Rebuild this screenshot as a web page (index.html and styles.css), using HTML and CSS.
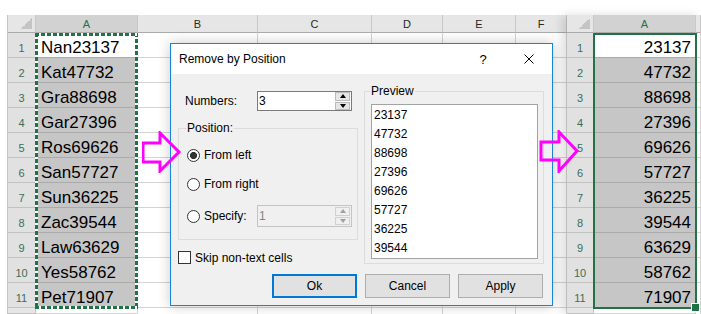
FILE: index.html
```html
<!DOCTYPE html>
<html lang="en">
<head>
    <meta charset="UTF-8">
    <title>Remove by Position</title>
    <link rel="stylesheet" href="styles.css">
</head>
<body>
<div class="screen">
    <!-- sheet before -->
    <div class="sheet sheet-left">
        <div class="col rh">
            <div class="hd corner"></div>
            <div class="cell">1</div>
            <div class="cell">2</div>
            <div class="cell">3</div>
            <div class="cell">4</div>
            <div class="cell">5</div>
            <div class="cell">6</div>
            <div class="cell">7</div>
            <div class="cell">8</div>
            <div class="cell">9</div>
            <div class="cell">10</div>
            <div class="cell">11</div>
            <div class="cell tail"></div>
        </div>
        <div class="col col-a">
            <div class="hd hd-sel">A</div>
            <div class="range range-copy">
                <div class="cell active">Nan23137</div>
                <div class="cell">Kat47732</div>
                <div class="cell">Gra88698</div>
                <div class="cell">Gar27396</div>
                <div class="cell">Ros69626</div>
                <div class="cell">San57727</div>
                <div class="cell">Sun36225</div>
                <div class="cell">Zac39544</div>
                <div class="cell">Law63629</div>
                <div class="cell">Yes58762</div>
                <div class="cell">Pet71907</div>
            </div>
            <div class="cell tail"></div>
        </div>
        <div class="col col-b"><div class="hd">B</div><div class="blank"></div></div>
        <div class="col col-c"><div class="hd">C</div><div class="blank"></div></div>
        <div class="col col-d"><div class="hd">D</div><div class="blank"></div></div>
        <div class="col col-e"><div class="hd">E</div><div class="blank"></div></div>
        <div class="col col-f"><div class="hd">F</div><div class="blank"></div></div>
    </div>

    <!-- sheet after -->
    <div class="sheet sheet-right">
        <div class="col rh">
            <div class="hd corner"></div>
            <div class="cell">1</div>
            <div class="cell">2</div>
            <div class="cell">3</div>
            <div class="cell">4</div>
            <div class="cell">5</div>
            <div class="cell">6</div>
            <div class="cell">7</div>
            <div class="cell">8</div>
            <div class="cell">9</div>
            <div class="cell">10</div>
            <div class="cell">11</div>
            <div class="cell tail"></div>
        </div>
        <div class="col col-a">
            <div class="hd hd-sel">A</div>
            <div class="range range-solid">
                <div class="cell active">23137</div>
                <div class="cell">47732</div>
                <div class="cell">88698</div>
                <div class="cell">27396</div>
                <div class="cell">69626</div>
                <div class="cell">57727</div>
                <div class="cell">36225</div>
                <div class="cell">39544</div>
                <div class="cell">63629</div>
                <div class="cell">58762</div>
                <div class="cell">71907</div>
            </div>
            <div class="cell tail"></div>
        </div>
        <div class="col col-rest"><div class="hd"></div><div class="blank"></div></div>
    </div>

    <!-- dialog -->
    <div class="dialog">
        <div class="titlebar">
            <span class="title">Remove by Position</span>
            <span class="tb-btn">?</span>
            <span class="tb-btn">
                <svg width="10" height="10" viewBox="0 0 10 10"><path d="M0.5 0.5 L9.5 9.5 M9.5 0.5 L0.5 9.5" stroke="#000" stroke-width="1"/></svg>
            </span>
        </div>
        <div class="dlg-body">
            <div class="left-pane">
                <div class="num-row">
                    <span class="num-label">Numbers:</span>
                    <div class="spin">
                        <span class="val">3</span>
                        <div class="spin-btns"><i class="up"></i><i class="down"></i></div>
                    </div>
                </div>
                <fieldset class="group pos">
                    <legend>Position:</legend>
                    <div class="opt first"><span class="radio checked"></span>From left</div>
                    <div class="opt"><span class="radio"></span>From right</div>
                    <div class="opt specify">
                        <span class="radio"></span>Specify:
                        <div class="spin disabled">
                            <span class="val">1</span>
                            <div class="spin-btns"><i class="up"></i><i class="down"></i></div>
                        </div>
                    </div>
                </fieldset>
                <div class="check-row"><span class="checkbox"></span>Skip non-text cells</div>
            </div>
            <fieldset class="group preview">
                <legend>Preview</legend>
                <div class="list">
                    <div>23137</div>
                    <div>47732</div>
                    <div>88698</div>
                    <div>27396</div>
                    <div>69626</div>
                    <div>57727</div>
                    <div>36225</div>
                    <div>39544</div>
                </div>
            </fieldset>
        </div>
        <div class="buttons">
            <div class="btn btn-ok">Ok</div>
            <div class="btn">Cancel</div>
            <div class="btn">Apply</div>
        </div>
    </div>

    <svg class="arrow arrow-left" width="40" height="42" viewBox="0 0 40 42">
        <polygon points="1,12 18,12 18,2 37,21 18,40 18,31 1,31" fill="none" stroke="#ff00ff" stroke-width="3"/>
    </svg>
    <svg class="arrow arrow-right" width="41" height="43" viewBox="0 0 41 43">
        <polygon points="2,12 20,12 20,2 38,21 20,41 20,30 2,30" fill="none" stroke="#ff00ff" stroke-width="3"/>
    </svg>
</div>
</body>
</html>
```

FILE: styles.css
```css
* {
    margin: 0;
    padding: 0;
    box-sizing: border-box;
}

body {
    font-family: "Liberation Sans", Arial, sans-serif;
    background: #fff;
}

.screen {
    position: relative;
    width: 701px;
    height: 314px;
    overflow: hidden;
    display: flex;
    padding-top: 15px;
}

/* sheets */
.sheet {
    display: flex;
    height: 299px;
    background: #fff;
}

.sheet-left {
    width: 567px;
    padding-left: 7px;
}

.sheet-right {
    width: 134px;
    box-shadow: -5px 0 9px rgba(0, 0, 0, 0.13);
}

.col {
    display: flex;
    flex-direction: column;
    flex-shrink: 0;
}

.hd {
    height: 18px;
    flex-shrink: 0;
    background: #e6e6e6;
    border-right: 1px solid #c8c8c8;
    border-bottom: 1px solid #ababab;
    font-size: 11px;
    color: #262626;
    display: flex;
    align-items: center;
    justify-content: center;
}

.hd-sel {
    background: #d2d2d2;
    color: #217346;
}

.corner {
    background: #e6e6e6 linear-gradient(to top left, #c4c4c4 50%, transparent 50%) no-repeat right 3px bottom 3px / 11px 11px;
}

.cell {
    height: 25px;
    flex-shrink: 0;
    border-right: 1px solid #d4d4d4;
    border-bottom: 1px solid #d4d4d4;
    font-size: 17px;
    line-height: 18px;
    display: flex;
    align-items: flex-end;
    color: #000;
}

.cell.tail {
    height: 6px;
    background: #fff;
}

.rh .cell {
    background: #e1e1e1;
    border-color: #c2c2c2;
    justify-content: center;
    font-size: 11px;
    line-height: 13px;
    padding-bottom: 2px;
    color: #3b6e58;
}

.rh .cell.tail {
    background: #e6e6e6;
}

.sheet-left .rh {
    width: 29px;
    border-left: 1px solid #c6c6c6;
}

.sheet-right .rh {
    width: 27px;
}

.col-a {
    width: 102px;
}

.col-b { width: 120px; }
.col-c { width: 114px; }
.col-d { width: 71px; }
.col-e { width: 73px; }
.col-f { width: 51px; }
.col-rest { width: 5px; }

.blank {
    flex: 1;
    border-right: 1px solid #d4d4d4;
    background: repeating-linear-gradient(to bottom, #fff 0 24px, #d4d4d4 24px 25px);
}

.range {
    position: relative;
}

.range .cell {
    background: #c6c6c6;
    border-color: #ababab;
}

.range .cell.active {
    background: #fff;
}

.range-copy .cell {
    padding-left: 5px;
}

.range-copy::after {
    content: '';
    position: absolute;
    top: 0;
    right: 0;
    bottom: -1px;
    left: -1px;
    background:
        repeating-linear-gradient(90deg, #217346 0 4px, #fff 4px 6px) top / 100% 3px no-repeat,
        repeating-linear-gradient(90deg, #217346 0 4px, #fff 4px 6px) bottom / 100% 3px no-repeat,
        repeating-linear-gradient(180deg, #217346 0 4px, #fff 4px 6px) left / 3px 100% no-repeat,
        repeating-linear-gradient(180deg, #217346 0 4px, #fff 4px 6px) right / 3px 100% no-repeat;
}

.range-solid .cell {
    justify-content: flex-end;
    padding-right: 4px;
}

.range-solid::after {
    content: '';
    position: absolute;
    top: 0;
    right: -1px;
    bottom: -1px;
    left: -1px;
    border: 2px solid #217346;
}

.range-solid::before {
    content: '';
    position: absolute;
    right: -4px;
    bottom: -4px;
    width: 7px;
    height: 7px;
    background: #217346;
    border: 1px solid #fff;
    z-index: 1;
}

/* dialog */
.dialog {
    position: absolute;
    left: 170px;
    top: 43px;
    width: 383px;
    height: 263px;
    background: #f0f0f0;
    border: 1px solid #1883d7;
    box-shadow: 0 0 12px rgba(0, 0, 0, 0.22);
    font-size: 12px;
    color: #000;
    z-index: 2;
}

.titlebar {
    height: 30px;
    background: #fff;
    display: flex;
    align-items: center;
}

.title {
    flex: 1;
    padding-left: 8px;
}

.tb-btn {
    width: 46px;
    height: 30px;
    display: flex;
    align-items: center;
    justify-content: center;
    font-size: 13px;
}

.dlg-body {
    display: grid;
    grid-template-columns: 180px 180px;
    column-gap: 6px;
    padding-left: 7px;
}

.num-row {
    display: flex;
    align-items: center;
    height: 20px;
    margin-top: 17px;
    padding: 0 6px 0 7px;
}

.num-label {
    flex: 1;
}

.spin {
    width: 95px;
    height: 20px;
    border: 1px solid #7a7a7a;
    background: #fff;
    display: flex;
    align-items: center;
}

.spin .val {
    flex: 1;
    padding-left: 1px;
}

.spin-btns {
    width: 15px;
    height: 18px;
    margin-right: 1px;
    display: flex;
    flex-direction: column;
    gap: 1px;
}

.spin-btns i {
    flex: 1;
    background: #e6e6e6;
    border: 1px solid #bcbcbc;
    display: flex;
    align-items: center;
    justify-content: center;
}

.spin-btns i::before {
    content: '';
    border-left: 3.5px solid transparent;
    border-right: 3.5px solid transparent;
}

.spin-btns .up::before {
    border-bottom: 4px solid #000;
}

.spin-btns .down::before {
    border-top: 4px solid #000;
}

.spin.disabled {
    height: 22px;
    margin-left: auto;
    border-color: #c4c4c4;
    background: #f0f0f0;
    color: #838383;
}

.spin.disabled .spin-btns {
    height: 18px;
}

.spin.disabled .spin-btns i {
    background: #f0f0f0;
    border-color: #d0d0d0;
}

.spin.disabled .up::before {
    border-bottom-color: #a0a0a0;
}

.spin.disabled .down::before {
    border-top-color: #a0a0a0;
}

.group {
    border: 1px solid #dcdcdc;
    min-width: 0;
}

.group legend {
    padding: 0 1px;
    margin-left: -1px;
    line-height: 14px;
}

.pos {
    margin-top: 10px;
    padding: 0 5px 11px 8px;
}

.opt {
    display: flex;
    align-items: center;
    gap: 4px;
    height: 20px;
    margin-top: 9px;
}

.opt.first {
    margin-top: 10px;
}

.opt.specify {
    height: 24px;
    margin-top: 10px;
}

.radio {
    width: 13px;
    height: 13px;
    border: 1px solid #333;
    border-radius: 50%;
    background: #fff;
}

.radio.checked {
    background: radial-gradient(circle, #333 0 3.3px, #fff 3.8px);
}

.check-row {
    display: flex;
    align-items: center;
    gap: 4px;
    height: 13px;
    margin-top: 11px;
}

.checkbox {
    width: 13px;
    height: 13px;
    border: 1px solid #333;
    background: #fff;
}

.preview {
    margin-top: 10px;
    padding: 0 5px 4px 6px;
}

.list {
    margin-top: 6px;
    height: 155px;
    border: 1px solid #a3a3a3;
    background: #fff;
    padding: 1px 0 0 2px;
    line-height: 19px;
    overflow: hidden;
}

.buttons {
    display: flex;
    justify-content: flex-end;
    gap: 8px;
    margin-top: 10px;
    padding-right: 9px;
}

.btn {
    width: 85px;
    height: 24px;
    background: #e1e1e1;
    border: 1px solid #adadad;
    display: flex;
    align-items: center;
    justify-content: center;
}

.btn-ok {
    border: 2px solid #0078d7;
}

/* call-out arrows */
.arrow {
    position: absolute;
    z-index: 3;
}

.arrow-left {
    left: 142px;
    top: 131px;
}

.arrow-right {
    left: 539px;
    top: 130px;
}
```
